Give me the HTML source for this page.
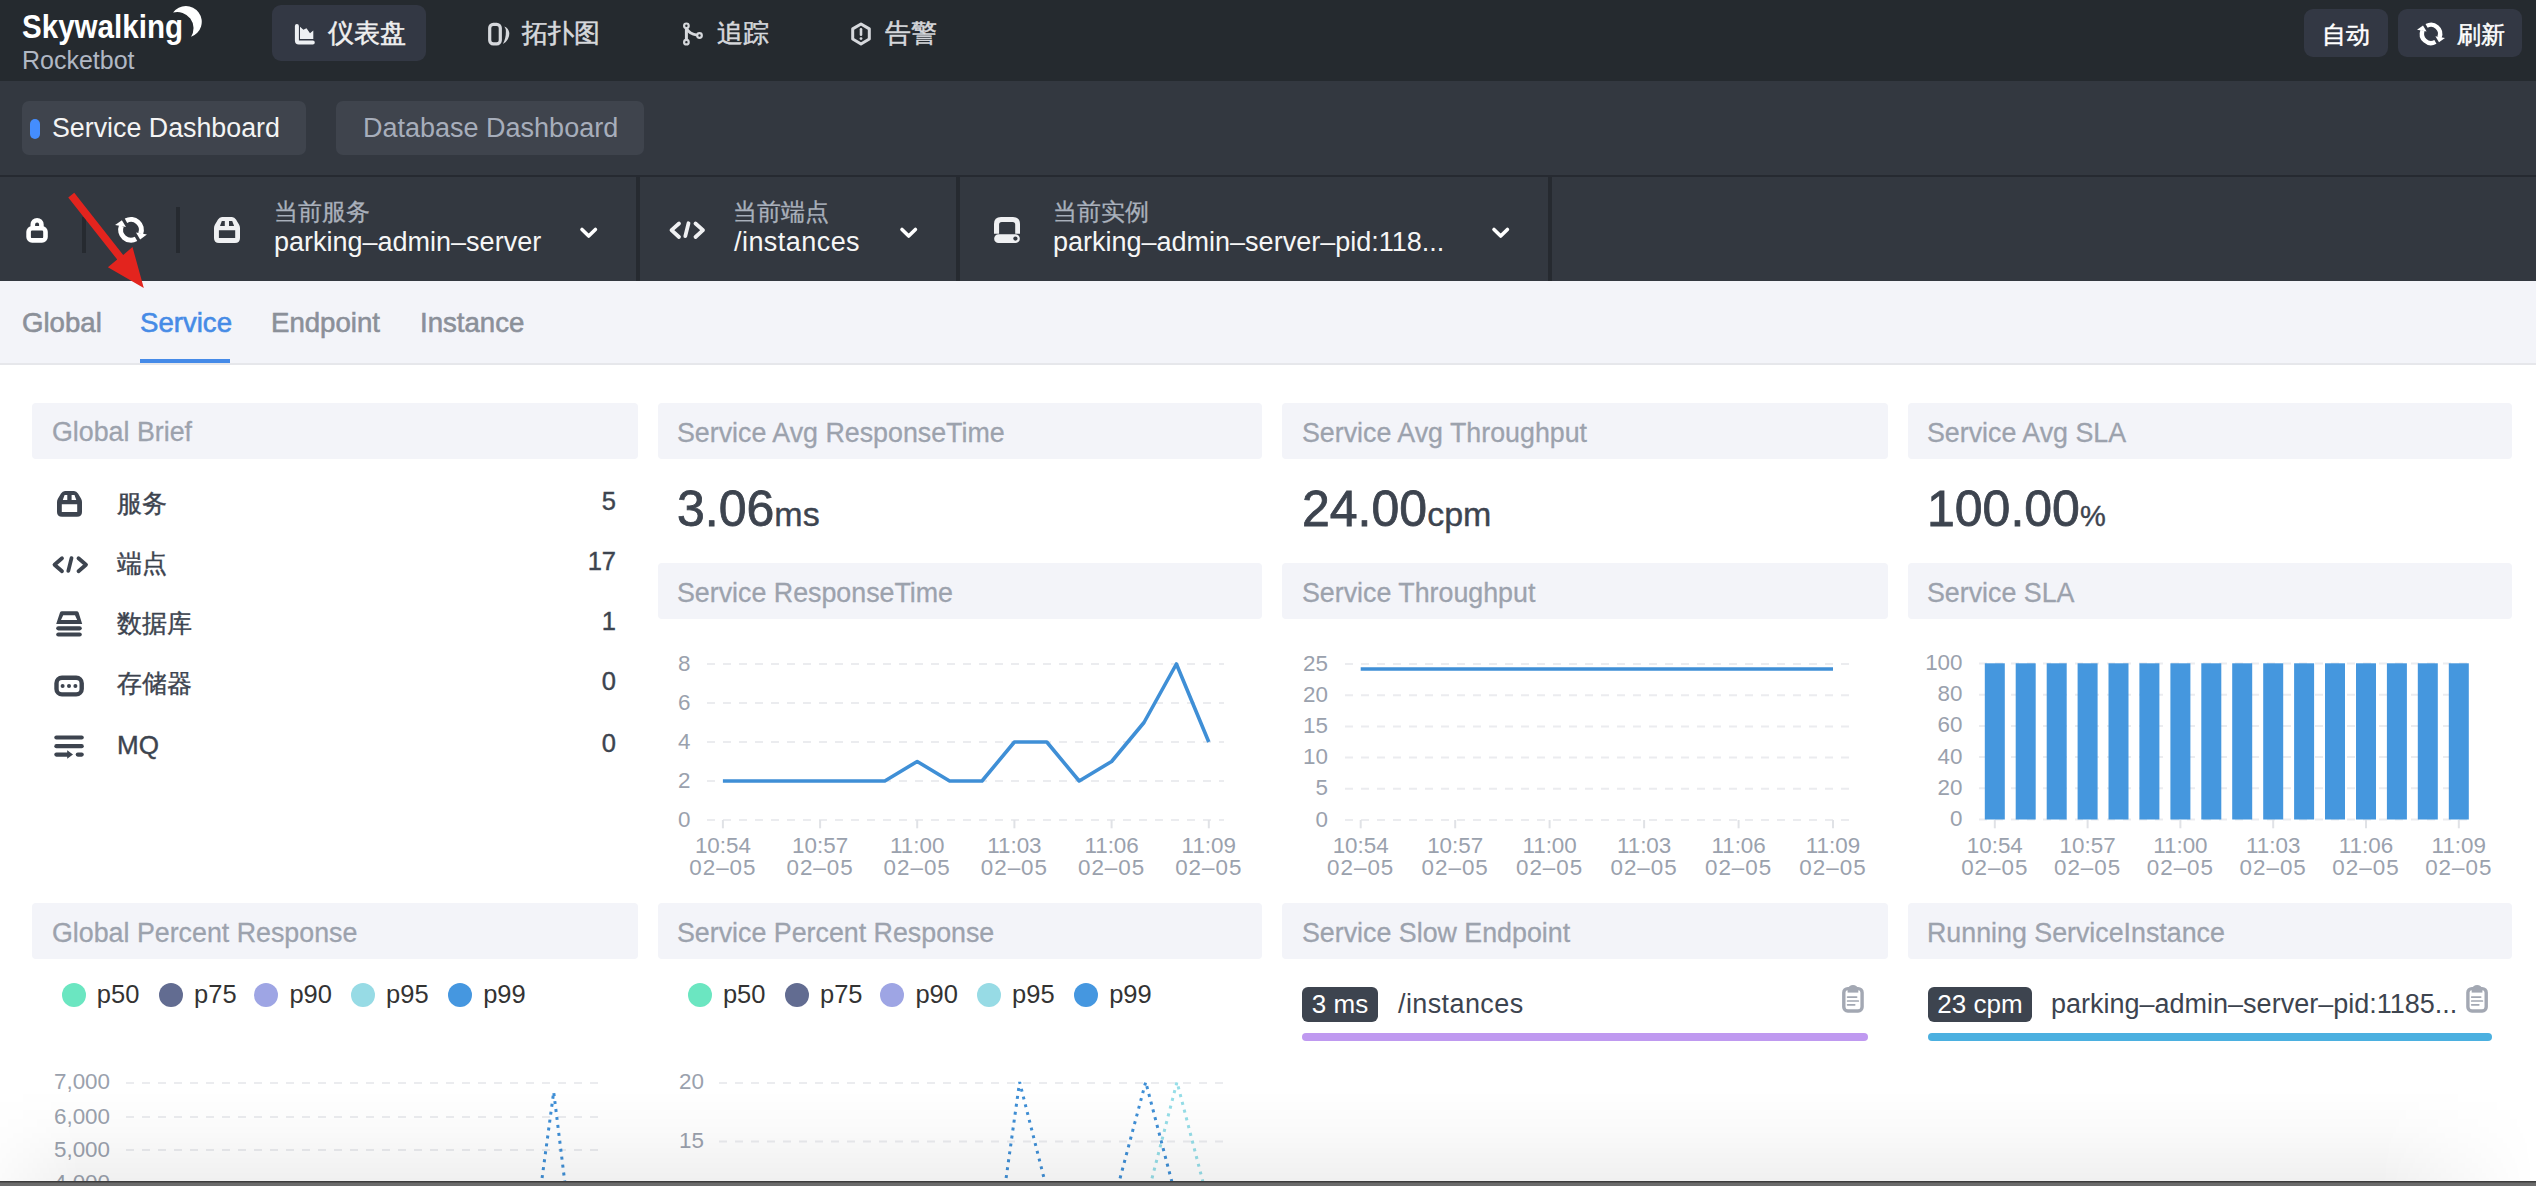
<!DOCTYPE html>
<html><head><meta charset="utf-8">
<style>
*{margin:0;padding:0;box-sizing:border-box}
html,body{width:2536px;height:1186px;overflow:hidden;background:#fff;font-family:"Liberation Sans",sans-serif}
.a{position:absolute;white-space:nowrap;line-height:1}
#hdr{position:absolute;left:0;top:0;width:2536px;height:81px;background:#252a2f}
#bar{position:absolute;left:0;top:81px;width:2536px;height:94px;background:#333840}
#line1{position:absolute;left:0;top:175px;width:2536px;height:2px;background:#262a31}
#sel{position:absolute;left:0;top:177px;width:2536px;height:104px;background:#333840}
#tabs{position:absolute;left:0;top:281px;width:2536px;height:84px;background:#f3f4f9;border-bottom:2px solid #e6e7eb}
.navbtn{position:absolute;background:#333844;border-radius:9px}
.dbtn{position:absolute;background:#3f444d;border-radius:7px}
.sep{position:absolute;background:#262a30}
.ttl{position:absolute;background:#f3f4f9;border-radius:4px}
.ttx{color:#9ca2ad;font-size:26.8px;-webkit-text-stroke:0.3px currentColor}
.dk{color:#3d444f}
.bf{-webkit-text-stroke:0.4px currentColor}
.val{line-height:1}
.big{font-size:50px;-webkit-text-stroke:0.8px currentColor}
.unit{font-size:34px;-webkit-text-stroke:0.4px currentColor}
.legend{position:absolute;white-space:nowrap;font-size:26.5px;color:#3d444f;line-height:24px;height:24px}
.legend i{display:inline-block;width:24px;height:24px;border-radius:50%;vertical-align:top;margin-right:9.5px}
.legend b{font-weight:400;display:inline-block;margin-right:22px;vertical-align:top}
.badge{position:absolute;height:35px;background:#3d444f;color:#fff;border-radius:6px;font-size:26px;line-height:35px;text-align:center;white-space:nowrap}
.pbar{position:absolute;height:8px;border-radius:4px}
.ldot{position:absolute;top:983px;width:24px;height:24px;border-radius:50%}
.ltx{top:982.3px;font-size:25.5px;color:#333}
</style></head><body>
<div id="hdr"></div>
<div id="bar"></div>
<div id="line1"></div>
<div id="sel"></div>
<div id="tabs"></div>

<!-- header -->
<div class="navbtn" style="left:272px;top:5px;width:154px;height:56px"></div>
<div class="navbtn" style="left:2304px;top:9px;width:84px;height:48px"></div>
<div class="navbtn" style="left:2398px;top:9px;width:124px;height:48px"></div>


<!-- header texts -->
<svg style="position:absolute;left:0;top:0" width="2536" height="181" viewBox="0 0 2536 181">
  <text x="22" y="37.5" font-family="Liberation Sans" font-weight="700" font-size="34" fill="#fff" textLength="161" lengthAdjust="spacingAndGlyphs">Skywalking</text>
  <path d="M173.1 12.5 A15.85 15.85 0 1 1 191.1 36.8 A16.3 16.3 0 0 0 173.1 12.5 Z" fill="#fff"/>
  <!-- dashboard icon -->
  <path d="M296.9 25.9 V40.5 Q296.9 42.4 298.8 42.4 H312.8" fill="none" stroke="#eef0f3" stroke-width="4" stroke-linecap="round"/>
  <path d="M300 26.8 L303.4 29.7 L306.5 28.2 L310 33.2 L313.3 30.5 V39 H300 Z" fill="#eef0f3"/>
  <!-- topology icon -->
  <rect x="489.7" y="24.3" width="10.6" height="19.5" rx="3.6" fill="none" stroke="#d6d8dc" stroke-width="3.2"/>
  <path d="M504.3 26.4 Q508.8 28.2 509.3 33 Q509.5 40.5 502.9 43.9 Q506 38.5 505.9 31 Q505.8 28.2 504.3 26.4 Z" fill="#d6d8dc"/>
  <!-- trace icon -->
  <g fill="none" stroke="#d6d8dc">
    <circle cx="686.4" cy="25.8" r="2.3" stroke-width="2.2"/><circle cx="686.4" cy="42.15" r="2.3" stroke-width="2.2"/><circle cx="699.5" cy="35.5" r="2.3" stroke-width="2.2"/>
    <path d="M686.4 28 V40" stroke-width="3"/>
    <path d="M686.8 28.8 Q689 33.5 697.3 35.1" stroke-width="2.8"/>
  </g>
  <!-- alarm icon -->
  <path d="M861 24 L869.3 28.9 V39 L861 44 L852.7 39 V28.9 Z" fill="none" stroke="#d6d8dc" stroke-width="3" stroke-linejoin="round"/>
  <path d="M861 29.2 V34.8" stroke="#d6d8dc" stroke-width="2.6" stroke-linecap="round"/>
  <circle cx="861" cy="38.6" r="1.4" fill="#d6d8dc"/>
  <!-- refresh icon header -->
  <g transform="translate(2431 33.9)" fill="#fff">
    <path d="M-4.41 -7.96 A9.1 9.1 0 0 1 8.44 3.41" fill="none" stroke="#fff" stroke-width="4.4"/>
    <path d="M4.4 2.4 L14 4.2 L8 8.4 Z"/>
    <path d="M4.41 7.96 A9.1 9.1 0 0 1 -8.44 -3.41" fill="none" stroke="#fff" stroke-width="4.4"/>
    <path d="M-4.4 -2.4 L-14 -4.2 L-8 -8.4 Z"/>
  </g>
</svg>
<div class="a" style="left:22px;top:48px;font-size:25px;color:#b1b8c4">Rocketbot</div>
<div class="a" style="left:328px;top:20px;font-size:26px;color:#efefef;-webkit-text-stroke:0.5px currentColor">仪表盘</div>
<div class="a" style="left:522px;top:20px;font-size:26px;color:#d6d8dc;-webkit-text-stroke:0.5px currentColor">拓扑图</div>
<div class="a" style="left:717px;top:20px;font-size:26px;color:#d6d8dc;-webkit-text-stroke:0.5px currentColor">追踪</div>
<div class="a" style="left:885px;top:20px;font-size:26px;color:#d6d8dc;-webkit-text-stroke:0.5px currentColor">告警</div>
<div class="a" style="left:2322px;top:23px;font-size:24px;color:#fff;-webkit-text-stroke:0.5px currentColor">自动</div>
<div class="a" style="left:2457px;top:23px;font-size:24px;color:#fff;-webkit-text-stroke:0.5px currentColor">刷新</div>

<!-- bar 2 -->
<div class="dbtn" style="left:22px;top:101px;width:284px;height:54px"></div>
<div class="dbtn" style="left:336px;top:101px;width:308px;height:54px;background:#3f444d"></div>
<div style="position:absolute;left:30px;top:119px;width:10px;height:20px;border-radius:5px;background:#448dfe"></div>
<div class="a" style="left:52px;top:115px;font-size:26.8px;color:#f4f4f4">Service Dashboard</div>
<div class="a" style="left:363px;top:115px;font-size:27px;color:#a7aebb">Database Dashboard</div>

<!-- selector separators -->
<div class="sep" style="left:82px;top:217px;width:4px;height:36px"></div>
<div class="sep" style="left:176px;top:207px;width:4px;height:46px"></div>
<div class="sep" style="left:636px;top:177px;width:4px;height:104px"></div>
<div class="sep" style="left:956px;top:177px;width:4px;height:104px"></div>
<div class="sep" style="left:1548px;top:177px;width:4px;height:104px"></div>


<!-- selector bar content -->
<svg style="position:absolute;left:0;top:177px" width="1600" height="104" viewBox="0 177 1600 104">
  <!-- lock -->
  <g fill="none" stroke="#fff" stroke-width="4.6">
    <rect x="28.6" y="228.3" width="16.9" height="12.1" rx="3.5"/>
    <path d="M32.8 228.3 V224.5 A4.3 4.3 0 0 1 41.4 224.5 V228.3"/>
  </g>
  <!-- refresh -->
  <g transform="translate(131 229.8) scale(1.14)" fill="#fff">
    <path d="M-4.41 -7.96 A9.1 9.1 0 0 1 8.44 3.41" fill="none" stroke="#fff" stroke-width="4.4"/>
    <path d="M4.4 2.4 L14 4.2 L8 8.4 Z"/>
    <path d="M4.41 7.96 A9.1 9.1 0 0 1 -8.44 -3.41" fill="none" stroke="#fff" stroke-width="4.4"/>
    <path d="M-4.4 -2.4 L-14 -4.2 L-8 -8.4 Z"/>
  </g>
  <!-- service icon -->
  <g id="svcicon">
    <path d="M214 243 V228 Q214 226 215 224.5 L218 219.5 Q219.5 217 222 217 H232 Q234.5 217 236 219.5 L239 224.5 Q240 226 240 228 V238 Q240 243 235 243 H219 Q214 243 214 238 Z M218.9 230.3 V237.9 H235.2 V230.3 Z M220 225.9 H224.8 V221 H221.8 Z M229 225.9 H234.1 L232.2 221 H229 Z" fill="#eff0f2" fill-rule="evenodd"/>
  </g>
  <!-- chevrons -->
  <g fill="none" stroke="#fff" stroke-width="3.6" stroke-linecap="round" stroke-linejoin="round">
    <path d="M582 229.5 L588.7 236 L595.4 229.5"/>
    <path d="M902 229.5 L908.7 236 L915.4 229.5"/>
    <path d="M1494 229.5 L1500.7 236 L1507.4 229.5"/>
  </g>
  <!-- endpoint icon -->
  <g fill="none" stroke="#eff0f2" stroke-width="3.8" stroke-linecap="round" stroke-linejoin="round">
    <path d="M679 223.5 L671.5 230.2 L679 237 M688.5 223.3 L685.3 236.1 M695.5 223.5 L703 230.2 L695.5 237"/>
  </g>
  <!-- instance icon -->
  <path d="M994 233.7 V224 Q994 217 1001 217 H1013 Q1020 217 1020 224 V233.7 H1015.2 V224.5 Q1015.2 221.9 1012.6 221.9 H1001.7 Q999.1 221.9 999.1 224.5 V233.7 Z" fill="#eff0f2"/>
  <path d="M998.5 234.3 H1015.5 A4.35 4.35 0 0 1 1015.5 243 H998.5 A4.35 4.35 0 0 1 998.5 234.3 Z" fill="#eff0f2"/>
  <circle cx="1015.4" cy="238.6" r="2.1" fill="#333840"/>
</svg>
<div class="a" style="left:274px;top:200px;font-size:24px;color:#a9b0bb;-webkit-text-stroke:0.3px currentColor">当前服务</div>
<div class="a" style="left:274px;top:229px;font-size:27px;color:#f6f6f6">parking–admin–server</div>
<div class="a" style="left:733px;top:200px;font-size:24px;color:#a9b0bb;-webkit-text-stroke:0.3px currentColor">当前端点</div>
<div class="a" style="left:734px;top:229px;font-size:27px;color:#f6f6f6;letter-spacing:0.45px">/instances</div>
<div class="a" style="left:1053px;top:200px;font-size:24px;color:#a9b0bb;-webkit-text-stroke:0.3px currentColor">当前实例</div>
<div class="a" style="left:1053px;top:229px;font-size:27px;color:#f6f6f6">parking–admin–server–pid:118...</div>

<!-- tabs -->
<div class="a" style="left:22px;top:309px;font-size:27.6px;color:#8b9099;-webkit-text-stroke:0.6px currentColor">Global</div>
<div class="a" style="left:140px;top:309px;font-size:27.6px;color:#468be6;-webkit-text-stroke:0.6px currentColor">Service</div>
<div class="a" style="left:271px;top:309px;font-size:27.6px;color:#8b9099;-webkit-text-stroke:0.6px currentColor">Endpoint</div>
<div class="a" style="left:420px;top:309px;font-size:27.6px;color:#8b9099;-webkit-text-stroke:0.6px currentColor">Instance</div>
<div style="position:absolute;left:140px;top:359px;width:90px;height:4px;background:#458ae8"></div>

<!-- card titles -->
<div class="ttl" style="left:32px;top:403px;width:606px;height:56px"></div>
<div class="ttl" style="left:658px;top:403px;width:604px;height:56px"></div>
<div class="ttl" style="left:1282px;top:403px;width:606px;height:56px"></div>
<div class="ttl" style="left:1908px;top:403px;width:604px;height:56px"></div>
<div class="ttl" style="left:658px;top:563px;width:604px;height:56px"></div>
<div class="ttl" style="left:1282px;top:563px;width:606px;height:56px"></div>
<div class="ttl" style="left:1908px;top:563px;width:604px;height:56px"></div>
<div class="ttl" style="left:32px;top:903px;width:606px;height:56px"></div>
<div class="ttl" style="left:658px;top:903px;width:604px;height:56px"></div>
<div class="ttl" style="left:1282px;top:903px;width:606px;height:56px"></div>
<div class="ttl" style="left:1908px;top:903px;width:604px;height:56px"></div>

<div class="a ttx" style="left:52px;top:419px">Global Brief</div>
<div class="a ttx" style="left:677px;top:420px">Service Avg ResponseTime</div>
<div class="a ttx" style="left:1302px;top:420px">Service Avg Throughput</div>
<div class="a ttx" style="left:1927px;top:420px">Service Avg SLA</div>
<div class="a ttx" style="left:677px;top:580px">Service ResponseTime</div>
<div class="a ttx" style="left:1302px;top:580px">Service Throughput</div>
<div class="a ttx" style="left:1927px;top:580px">Service SLA</div>
<div class="a ttx" style="left:52px;top:920px">Global Percent Response</div>
<div class="a ttx" style="left:677px;top:920px">Service Percent Response</div>
<div class="a ttx" style="left:1302px;top:920px">Service Slow Endpoint</div>
<div class="a ttx" style="left:1927px;top:920px">Running ServiceInstance</div>


<!-- content -->
<svg id="charts" style="position:absolute;left:0;top:0" width="2536" height="1186" viewBox="0 0 2536 1186" font-family="Liberation Sans"><line x1="707" y1="664" x2="1224" y2="664" stroke="#ebecef" stroke-width="2" stroke-dasharray="8 8"/><line x1="707" y1="703" x2="1224" y2="703" stroke="#ebecef" stroke-width="2" stroke-dasharray="8 8"/><line x1="707" y1="742" x2="1224" y2="742" stroke="#ebecef" stroke-width="2" stroke-dasharray="8 8"/><line x1="707" y1="781" x2="1224" y2="781" stroke="#ebecef" stroke-width="2" stroke-dasharray="8 8"/><line x1="707" y1="820" x2="1224" y2="820" stroke="#ebecef" stroke-width="2" stroke-dasharray="8 8"/><line x1="722.9" y1="820" x2="722.9" y2="828.3" stroke="#e0e2e6" stroke-width="2"/><line x1="820.1" y1="820" x2="820.1" y2="828.3" stroke="#e0e2e6" stroke-width="2"/><line x1="917.2" y1="820" x2="917.2" y2="828.3" stroke="#e0e2e6" stroke-width="2"/><line x1="1014.4" y1="820" x2="1014.4" y2="828.3" stroke="#e0e2e6" stroke-width="2"/><line x1="1111.6" y1="820" x2="1111.6" y2="828.3" stroke="#e0e2e6" stroke-width="2"/><line x1="1208.8" y1="820" x2="1208.8" y2="828.3" stroke="#e0e2e6" stroke-width="2"/><polyline points="722.9,781.0 755.3,781.0 787.7,781.0 820.1,781.0 852.5,781.0 884.8,781.0 917.2,761.5 949.6,781.0 982.0,781.0 1014.4,742.0 1046.8,742.0 1079.2,781.0 1111.6,761.5 1144.0,722.5 1176.4,664.0 1208.8,742.0" fill="none" stroke="#3f8fd6" stroke-width="3.6" stroke-linejoin="round"/><g font-size="22.4" fill="#9aa1ad"><text x="690.5" y="670.5" text-anchor="end">8</text><text x="690.5" y="709.5" text-anchor="end">6</text><text x="690.5" y="748.5" text-anchor="end">4</text><text x="690.5" y="787.5" text-anchor="end">2</text><text x="690.5" y="826.5" text-anchor="end">0</text><text x="722.9" y="852.6" text-anchor="middle">10:54</text><text x="722.9" y="874.8" text-anchor="middle" letter-spacing="1">02–05</text><text x="820.1" y="852.6" text-anchor="middle">10:57</text><text x="820.1" y="874.8" text-anchor="middle" letter-spacing="1">02–05</text><text x="917.2" y="852.6" text-anchor="middle">11:00</text><text x="917.2" y="874.8" text-anchor="middle" letter-spacing="1">02–05</text><text x="1014.4" y="852.6" text-anchor="middle">11:03</text><text x="1014.4" y="874.8" text-anchor="middle" letter-spacing="1">02–05</text><text x="1111.6" y="852.6" text-anchor="middle">11:06</text><text x="1111.6" y="874.8" text-anchor="middle" letter-spacing="1">02–05</text><text x="1208.8" y="852.6" text-anchor="middle">11:09</text><text x="1208.8" y="874.8" text-anchor="middle" letter-spacing="1">02–05</text></g><line x1="1345" y1="664" x2="1849" y2="664" stroke="#ebecef" stroke-width="2" stroke-dasharray="8 8"/><line x1="1345" y1="695.2" x2="1849" y2="695.2" stroke="#ebecef" stroke-width="2" stroke-dasharray="8 8"/><line x1="1345" y1="726.4" x2="1849" y2="726.4" stroke="#ebecef" stroke-width="2" stroke-dasharray="8 8"/><line x1="1345" y1="757.6" x2="1849" y2="757.6" stroke="#ebecef" stroke-width="2" stroke-dasharray="8 8"/><line x1="1345" y1="788.8" x2="1849" y2="788.8" stroke="#ebecef" stroke-width="2" stroke-dasharray="8 8"/><line x1="1345" y1="820" x2="1849" y2="820" stroke="#ebecef" stroke-width="2" stroke-dasharray="8 8"/><line x1="1360.7" y1="820" x2="1360.7" y2="828.3" stroke="#e0e2e6" stroke-width="2"/><line x1="1455.2" y1="820" x2="1455.2" y2="828.3" stroke="#e0e2e6" stroke-width="2"/><line x1="1549.6" y1="820" x2="1549.6" y2="828.3" stroke="#e0e2e6" stroke-width="2"/><line x1="1644.1" y1="820" x2="1644.1" y2="828.3" stroke="#e0e2e6" stroke-width="2"/><line x1="1738.6" y1="820" x2="1738.6" y2="828.3" stroke="#e0e2e6" stroke-width="2"/><line x1="1833.0" y1="820" x2="1833.0" y2="828.3" stroke="#e0e2e6" stroke-width="2"/><line x1="1360.7" y1="669" x2="1833.0" y2="669" stroke="#3f8fd6" stroke-width="3.6"/><g font-size="22.4" fill="#9aa1ad"><text x="1328" y="670.5" text-anchor="end">25</text><text x="1328" y="701.7" text-anchor="end">20</text><text x="1328" y="732.9" text-anchor="end">15</text><text x="1328" y="764.1" text-anchor="end">10</text><text x="1328" y="795.3" text-anchor="end">5</text><text x="1328" y="826.5" text-anchor="end">0</text><text x="1360.7" y="852.6" text-anchor="middle">10:54</text><text x="1360.7" y="874.8" text-anchor="middle" letter-spacing="1">02–05</text><text x="1455.2" y="852.6" text-anchor="middle">10:57</text><text x="1455.2" y="874.8" text-anchor="middle" letter-spacing="1">02–05</text><text x="1549.6" y="852.6" text-anchor="middle">11:00</text><text x="1549.6" y="874.8" text-anchor="middle" letter-spacing="1">02–05</text><text x="1644.1" y="852.6" text-anchor="middle">11:03</text><text x="1644.1" y="874.8" text-anchor="middle" letter-spacing="1">02–05</text><text x="1738.6" y="852.6" text-anchor="middle">11:06</text><text x="1738.6" y="874.8" text-anchor="middle" letter-spacing="1">02–05</text><text x="1833.0" y="852.6" text-anchor="middle">11:09</text><text x="1833.0" y="874.8" text-anchor="middle" letter-spacing="1">02–05</text></g><line x1="1979" y1="663.5" x2="2474" y2="663.5" stroke="#ebecef" stroke-width="2" stroke-dasharray="8 8"/><line x1="1979" y1="694.7" x2="2474" y2="694.7" stroke="#ebecef" stroke-width="2" stroke-dasharray="8 8"/><line x1="1979" y1="725.9" x2="2474" y2="725.9" stroke="#ebecef" stroke-width="2" stroke-dasharray="8 8"/><line x1="1979" y1="757.1" x2="2474" y2="757.1" stroke="#ebecef" stroke-width="2" stroke-dasharray="8 8"/><line x1="1979" y1="788.3" x2="2474" y2="788.3" stroke="#ebecef" stroke-width="2" stroke-dasharray="8 8"/><line x1="1979" y1="819.5" x2="2474" y2="819.5" stroke="#ebecef" stroke-width="2" stroke-dasharray="8 8"/><line x1="1994.8" y1="820" x2="1994.8" y2="828.3" stroke="#e0e2e6" stroke-width="2"/><line x1="2087.6" y1="820" x2="2087.6" y2="828.3" stroke="#e0e2e6" stroke-width="2"/><line x1="2180.4" y1="820" x2="2180.4" y2="828.3" stroke="#e0e2e6" stroke-width="2"/><line x1="2273.2" y1="820" x2="2273.2" y2="828.3" stroke="#e0e2e6" stroke-width="2"/><line x1="2366.0" y1="820" x2="2366.0" y2="828.3" stroke="#e0e2e6" stroke-width="2"/><line x1="2458.8" y1="820" x2="2458.8" y2="828.3" stroke="#e0e2e6" stroke-width="2"/><rect x="1984.8" y="663.3" width="20" height="156.2" fill="#4597de"/><rect x="2015.7" y="663.3" width="20" height="156.2" fill="#4597de"/><rect x="2046.7" y="663.3" width="20" height="156.2" fill="#4597de"/><rect x="2077.6" y="663.3" width="20" height="156.2" fill="#4597de"/><rect x="2108.5" y="663.3" width="20" height="156.2" fill="#4597de"/><rect x="2139.4" y="663.3" width="20" height="156.2" fill="#4597de"/><rect x="2170.4" y="663.3" width="20" height="156.2" fill="#4597de"/><rect x="2201.3" y="663.3" width="20" height="156.2" fill="#4597de"/><rect x="2232.2" y="663.3" width="20" height="156.2" fill="#4597de"/><rect x="2263.2" y="663.3" width="20" height="156.2" fill="#4597de"/><rect x="2294.1" y="663.3" width="20" height="156.2" fill="#4597de"/><rect x="2325.0" y="663.3" width="20" height="156.2" fill="#4597de"/><rect x="2356.0" y="663.3" width="20" height="156.2" fill="#4597de"/><rect x="2386.9" y="663.3" width="20" height="156.2" fill="#4597de"/><rect x="2417.8" y="663.3" width="20" height="156.2" fill="#4597de"/><rect x="2448.8" y="663.3" width="20" height="156.2" fill="#4597de"/><g font-size="22.4" fill="#9aa1ad"><text x="1962.5" y="670.0" text-anchor="end">100</text><text x="1962.5" y="701.2" text-anchor="end">80</text><text x="1962.5" y="732.4" text-anchor="end">60</text><text x="1962.5" y="763.6" text-anchor="end">40</text><text x="1962.5" y="794.8" text-anchor="end">20</text><text x="1962.5" y="826.0" text-anchor="end">0</text><text x="1994.8" y="852.6" text-anchor="middle">10:54</text><text x="1994.8" y="874.8" text-anchor="middle" letter-spacing="1">02–05</text><text x="2087.6" y="852.6" text-anchor="middle">10:57</text><text x="2087.6" y="874.8" text-anchor="middle" letter-spacing="1">02–05</text><text x="2180.4" y="852.6" text-anchor="middle">11:00</text><text x="2180.4" y="874.8" text-anchor="middle" letter-spacing="1">02–05</text><text x="2273.2" y="852.6" text-anchor="middle">11:03</text><text x="2273.2" y="874.8" text-anchor="middle" letter-spacing="1">02–05</text><text x="2366.0" y="852.6" text-anchor="middle">11:06</text><text x="2366.0" y="874.8" text-anchor="middle" letter-spacing="1">02–05</text><text x="2458.8" y="852.6" text-anchor="middle">11:09</text><text x="2458.8" y="874.8" text-anchor="middle" letter-spacing="1">02–05</text></g><line x1="126" y1="1083" x2="598" y2="1083" stroke="#ebecef" stroke-width="2" stroke-dasharray="8 8"/><line x1="126" y1="1117" x2="598" y2="1117" stroke="#ebecef" stroke-width="2" stroke-dasharray="8 8"/><line x1="126" y1="1150" x2="598" y2="1150" stroke="#ebecef" stroke-width="2" stroke-dasharray="8 8"/><line x1="126" y1="1183" x2="598" y2="1183" stroke="#ebecef" stroke-width="2" stroke-dasharray="8 8"/><g font-size="22.4" fill="#9aa1ad"><text x="110" y="1089.3" text-anchor="end">7,000</text><text x="110" y="1123.5" text-anchor="end">6,000</text><text x="110" y="1156.5" text-anchor="end">5,000</text><text x="110" y="1190.0" text-anchor="end">4,000</text></g><polyline points="541,1186 553.7,1092 565.3,1186" fill="none" stroke="#3f8fd6" stroke-width="3" stroke-dasharray="3 5"/><line x1="719" y1="1083" x2="1224" y2="1083" stroke="#ebecef" stroke-width="2" stroke-dasharray="8 8"/><line x1="719" y1="1141.5" x2="1224" y2="1141.5" stroke="#ebecef" stroke-width="2" stroke-dasharray="8 8"/><g font-size="22.4" fill="#9aa1ad"><text x="704" y="1089.0" text-anchor="end">20</text><text x="704" y="1147.9" text-anchor="end">15</text></g><polyline points="1005,1186 1019.6,1082 1046,1186" fill="none" stroke="#3f8fd6" stroke-width="3" stroke-dasharray="3 5"/><polyline points="1118,1186 1145.7,1082 1173,1186" fill="none" stroke="#3f8fd6" stroke-width="3" stroke-dasharray="3 5"/><polyline points="1150,1186 1177,1082 1204,1186" fill="none" stroke="#96dee8" stroke-width="3" stroke-dasharray="3 5"/></svg>
<svg style="position:absolute;left:0;top:480px" width="100" height="290" viewBox="0 480 100 290">
  <path d="M57 516.7 V502 Q57 500 58 498.5 L61 493.5 Q62.5 491 65 491 H74 Q76.5 491 78 493.5 L81 498.5 Q82 500 82 502 V512 Q82 516.7 77 516.7 H62 Q57 516.7 57 512 Z M61.8 504.3 V511.9 H77.2 V504.3 Z M62.8 499.9 H67.3 V495 H64.6 Z M71.6 499.9 H76.3 L74.5 495 H71.6 Z" fill="#3d444f" fill-rule="evenodd"/>
  <g fill="none" stroke="#3d444f" stroke-width="3.8" stroke-linecap="round" stroke-linejoin="round">
    <path d="M62 558.3 L54.5 564.8 L62 571.3 M71.5 558.1 L68.3 570.9 M78.5 558.3 L86 564.8 L78.5 571.3"/>
  </g>
  <path d="M57.5 623.9 L60.8 613 Q61.3 611.2 63.2 611.2 H75.6 Q77.5 611.2 78 613 L81.4 623.9 Q81.6 624 81.5 623.9 Z" fill="none"/>
  <path d="M56.2 623.9 L60 612.6 Q60.5 611.2 62 611.2 H76.6 Q78.1 611.2 78.6 612.6 L82.2 623.9 Z M61 619.9 H77.2 L75 615.2 H63.2 Z" fill="#3d444f" fill-rule="evenodd"/>
  <line x1="58.3" y1="628.3" x2="79.7" y2="628.3" stroke="#3d444f" stroke-width="4.2" stroke-linecap="round"/>
  <line x1="58.3" y1="634.5" x2="79.7" y2="634.5" stroke="#3d444f" stroke-width="4.2" stroke-linecap="round"/>
  <rect x="56.5" y="677.7" width="25.2" height="16.7" rx="5.5" fill="none" stroke="#3d444f" stroke-width="4.4"/>
  <circle cx="62.6" cy="686" r="2" fill="#3d444f"/><circle cx="69" cy="686" r="2" fill="#3d444f"/><circle cx="75.4" cy="686" r="2" fill="#3d444f"/>
  <g stroke="#3d444f" stroke-width="4.2" stroke-linecap="round">
    <line x1="56.4" y1="737.5" x2="81.7" y2="737.5"/><line x1="56.4" y1="746.2" x2="81.7" y2="746.2"/>
    <line x1="56.4" y1="754.6" x2="68" y2="754.6"/><line x1="77.8" y1="754.6" x2="81.7" y2="754.6"/>
  </g>
  <path d="M67.2 750.2 L73 754.5 L67.2 758.8 Z" fill="#3d444f"/>
</svg>
<div class="a dk bf" style="left:117px;top:491px;font-size:25px">服务</div>
<div class="a dk bf" style="left:117px;top:551px;font-size:25px">端点</div>
<div class="a dk bf" style="left:117px;top:611px;font-size:25px">数据库</div>
<div class="a dk bf" style="left:117px;top:671px;font-size:25px">存储器</div>
<div class="a dk bf" style="left:117px;top:732px;font-size:26px">MQ</div>
<div class="a dk bf" style="right:1920px;top:489px;font-size:25.5px">5</div>
<div class="a dk bf" style="right:1920px;top:549px;font-size:25.5px">17</div>
<div class="a dk bf" style="right:1920px;top:609px;font-size:25.5px">1</div>
<div class="a dk bf" style="right:1920px;top:669px;font-size:25.5px">0</div>
<div class="a dk bf" style="right:1920px;top:731px;font-size:25.5px">0</div>

<div class="a dk val" style="left:677px;top:483.5px"><span class="big">3.06</span><span class="unit">ms</span></div>
<div class="a dk val" style="left:1302px;top:483.5px"><span class="big">24.00</span><span class="unit">cpm</span></div>
<div class="a dk val" style="left:1927px;top:483.5px"><span class="big">100.00</span><span class="unit" style="font-size:29px">%</span></div>

<!-- legends -->
<div class="ldot" style="left:61.8px;background:#6be6c1"></div><div class="a ltx" style="left:96.8px">p50</div>
<div class="ldot" style="left:159.1px;background:#626c91"></div><div class="a ltx" style="left:194.1px">p75</div>
<div class="ldot" style="left:254.4px;background:#9ea5e4"></div><div class="a ltx" style="left:289.4px">p90</div>
<div class="ldot" style="left:351.1px;background:#97dbe5"></div><div class="a ltx" style="left:386.1px">p95</div>
<div class="ldot" style="left:448.2px;background:#4597e0"></div><div class="a ltx" style="left:483.2px">p99</div>
<div class="ldot" style="left:687.9px;background:#6be6c1"></div><div class="a ltx" style="left:722.9px">p50</div>
<div class="ldot" style="left:785.0px;background:#626c91"></div><div class="a ltx" style="left:820.0px">p75</div>
<div class="ldot" style="left:880.4px;background:#9ea5e4"></div><div class="a ltx" style="left:915.4px">p90</div>
<div class="ldot" style="left:977.1px;background:#97dbe5"></div><div class="a ltx" style="left:1012.1px">p95</div>
<div class="ldot" style="left:1074.2px;background:#4597e0"></div><div class="a ltx" style="left:1109.2px">p99</div>
<!-- slow endpoint -->
<div class="badge" style="left:1302px;top:987px;width:76px">3 ms</div>
<div class="a dk" style="left:1398px;top:991px;font-size:27px;letter-spacing:0.4px">/instances</div>
<div class="pbar" style="left:1302px;top:1033px;width:566px;background:#bf99f0"></div>
<div class="badge" style="left:1928px;top:987px;width:104px">23 cpm</div>
<div class="a dk" style="left:2051px;top:991px;font-size:27px">parking–admin–server–pid:1185...</div>
<div class="pbar" style="left:1928px;top:1033px;width:564px;background:#4bb0e0"></div>
<svg style="position:absolute;left:1830px;top:980px" width="40" height="40" viewBox="1830 980 40 40">
  <g fill="none" stroke="#a3a8b3"><rect x="1843.8" y="988.6" width="18.3" height="22.4" rx="4" stroke-width="3.4"/>
  <path d="M1847.6 997.1 H1856.6 M1847.6 1001 H1858.3 M1847.6 1004.8 H1854.7" stroke-width="1.7" stroke-linecap="round"/></g>
  <path d="M1848.0 988.5 Q1849.0 985 1853.0 985 Q1857.0 985 1858.0 988.5 Z" fill="#a3a8b3"/>
  <rect x="1847.6" y="990" width="10.7" height="2.6" fill="#a3a8b3"/>
</svg>
<svg style="position:absolute;left:2455px;top:980px" width="40" height="40" viewBox="2455 980 40 40">
  <g fill="none" stroke="#a3a8b3"><rect x="2467.9" y="988.6" width="18.3" height="22.4" rx="4" stroke-width="3.4"/>
  <path d="M2471.7 997.1 H2480.7 M2471.7 1001 H2482.4 M2471.7 1004.8 H2478.8" stroke-width="1.7" stroke-linecap="round"/></g>
  <path d="M2472.1 988.5 Q2473.1 985 2477.1 985 Q2481.1 985 2482.1 988.5 Z" fill="#a3a8b3"/>
  <rect x="2471.7" y="990" width="10.7" height="2.6" fill="#a3a8b3"/>
</svg>

<!-- red arrow -->
<svg style="position:absolute;left:0;top:180px" width="160" height="120" viewBox="0 180 160 120">
  <path d="M68.25 197.4 L74.25 192.8 L123.2 254.9 L132.5 247.1 L143.8 288 L107.9 267.3 L117.2 259.5 Z" fill="#e3241e"/>
</svg>

<!-- bottom shadow + bar -->
<div style="position:absolute;left:0;top:1090px;width:2536px;height:91px;background:linear-gradient(to bottom,rgba(0,0,0,0) 0,rgba(0,0,0,0.018) 45%,rgba(0,0,0,0.06) 100%);-webkit-mask-image:linear-gradient(to right,rgba(0,0,0,0.3) 0,#000 80px,#000 2380px,rgba(0,0,0,0) 2536px)"></div>
<div style="position:absolute;left:0;top:1181px;width:2536px;height:5px;background:linear-gradient(to bottom,#3c3c3c 0,#3c3c3c 1px,#6b6b6b 2px,#6b6b6b 5px)"></div>

</body></html>
